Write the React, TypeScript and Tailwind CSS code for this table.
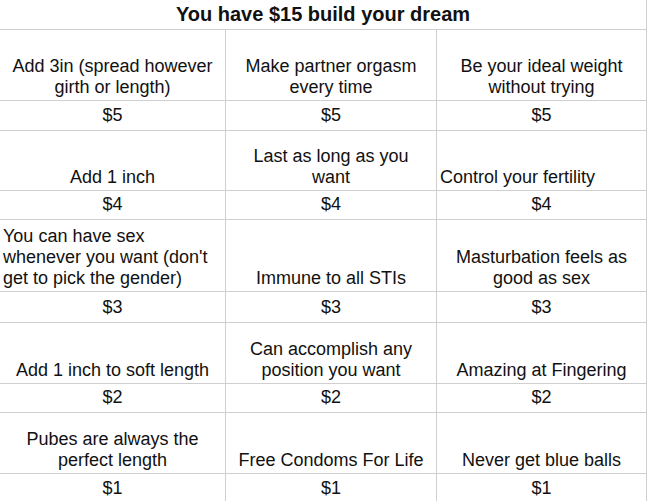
type Cell = { lines: string[]; left?: boolean };

type Tier = {
  price: string;
  textH: string;
  priceH: string;
  cells: Cell[];
};

const tiers: Tier[] = [
  {
    price: '$5',
    textH: 'h-[71px]',
    priceH: 'h-[30px]',
    cells: [
      { lines: ['Add 3in (spread however', 'girth or length)'] },
      { lines: ['Make partner orgasm', 'every time'] },
      { lines: ['Be your ideal weight', 'without trying'] },
    ],
  },
  {
    price: '$4',
    textH: 'h-[60px]',
    priceH: 'h-[29px]',
    cells: [
      { lines: ['Add 1 inch'] },
      { lines: ['Last as long as you', 'want'] },
      { lines: ['Control your fertility'], left: true },
    ],
  },
  {
    price: '$3',
    textH: 'h-[72px]',
    priceH: 'h-[31px]',
    cells: [
      { lines: ['You can have sex', "whenever you want (don't", 'get to pick the gender)'], left: true },
      { lines: ['Immune to all STIs'] },
      { lines: ['Masturbation feels as', 'good as sex'] },
    ],
  },
  {
    price: '$2',
    textH: 'h-[61px]',
    priceH: 'h-[29px]',
    cells: [
      { lines: ['Add 1 inch to soft length'] },
      { lines: ['Can accomplish any', 'position you want'] },
      { lines: ['Amazing at Fingering'] },
    ],
  },
  {
    price: '$1',
    textH: 'h-[61px]',
    priceH: 'h-[30px]',
    cells: [
      { lines: ['Pubes are always the', 'perfect length'] },
      { lines: ['Free Condoms For Life'] },
      { lines: ['Never get blue balls'] },
    ],
  },
];

export default function App() {
  return (
    <div className="w-[652px] h-[501px] overflow-hidden bg-white text-[#111] font-['Liberation_Sans',Arial,sans-serif]">
      <div className="grid w-[647px] grid-cols-[226px_211px_210px]">
        {/* merged title row */}
        <div className="col-span-3 flex h-[30px] items-center justify-center border-b border-r border-[#cfcfcf] text-[20px] font-bold leading-[23px]">
          You have $15 build your dream
        </div>

        {tiers.map((tier) => (
          <>
            {tier.cells.map((cell, i) => (
              <div
                key={tier.price + 't' + i}
                className={`flex ${tier.textH} items-end border-b border-r border-[#cfcfcf] pb-[2px] text-[18px] leading-[21px] ${
                  cell.left ? 'justify-start pl-[3px] text-left' : 'justify-center text-center'
                }`}
              >
                <div>
                  {cell.lines.map((l, j) => (
                    <div key={j} className="whitespace-nowrap">{l}</div>
                  ))}
                </div>
              </div>
            ))}
            {tier.cells.map((_, i) => (
              <div
                key={tier.price + 'p' + i}
                className={`flex ${tier.priceH} items-end justify-center border-b border-r border-[#cfcfcf] pb-[4px] text-[18px] leading-[21px]`}
              >
                {tier.price}
              </div>
            ))}
          </>
        ))}
      </div>
    </div>
  );
}
